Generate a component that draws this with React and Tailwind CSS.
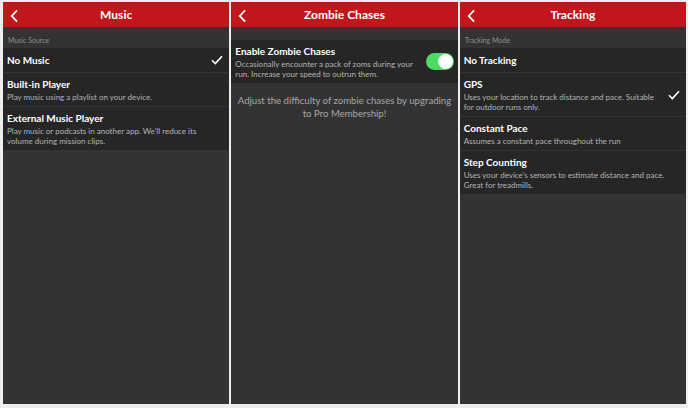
import React from 'react';

const font = { fontFamily: 'Lato, "Noto Sans", sans-serif' };

function Chevron() {
  return (
    <svg width="8" height="12" viewBox="0 0 8 12" className="absolute left-[7px] top-[8px]">
      <path d="M6.5 1 L1.8 6 L6.5 11" fill="none" stroke="white" strokeWidth="1.8" strokeLinecap="square" />
    </svg>
  );
}

function Check() {
  return (
    <svg width="12" height="10" viewBox="0 0 12 10" className="shrink-0">
      <path d="M1 5.2 L4.3 8.5 L11 1.2" fill="none" stroke="white" strokeWidth="1.6" />
    </svg>
  );
}

function Header({ title }) {
  return (
    <div className="relative h-[25px] bg-[#c1161c] flex items-center justify-center">
      <Chevron />
      <span className="text-white text-[12px] font-bold leading-none">{title}</span>
    </div>
  );
}

function SectionLabel({ children }) {
  return (
    <div className="h-[21px] flex items-end pb-[4px] pl-[5px] text-[7px] text-[#8f8f8f] leading-none">
      {children}
    </div>
  );
}

function Row({ title, sub, checked, last }) {
  return (
    <div className={`bg-[#262626] flex items-center pl-[4px] pr-[6px] ${last ? '' : 'border-b border-[#333333]'} ${sub ? 'py-[4.5px]' : 'h-[25px]'}`}>
      <div className="flex-1">
        <div className="text-white text-[10px] font-bold leading-[13px]">{title}</div>
        {sub && <div className="text-[#b5b5b5] text-[8px] leading-[10px] mt-[1px]">{sub}</div>}
      </div>
      {checked && <Check />}
    </div>
  );
}

function Panel({ children }) {
  return <div className="flex-1 bg-[#333333] flex flex-col">{children}</div>;
}

export default function App() {
  return (
    <div className="w-[688px] h-[408px] bg-[#eeeeee] flex gap-[2px] pl-[3px] pr-[2px] pt-[2px] pb-[4px]" style={font}>
      <Panel>
        <Header title="Music" />
        <SectionLabel>Music Source</SectionLabel>
        <Row title="No Music" checked />
        <Row title="Built-in Player" sub="Play music using a playlist on your device." />
        <Row title="External Music Player" sub={<>Play music or podcasts in another app. We’ll reduce its<br />volume during mission clips.</>} last />
      </Panel>
      <Panel>
        <Header title="Zombie Chases" />
        <div className="h-[13px]" />
        <div className="bg-[#262626] flex items-center pl-[4px] pr-[4px] h-[43px]">
          <div className="flex-1">
            <div className="text-white text-[10px] font-bold leading-[13px]">Enable Zombie Chases</div>
            <div className="text-[#b5b5b5] text-[8px] leading-[10px] mt-[1px]">
              Occasionally encounter a pack of zoms during your<br />run. Increase your speed to outrun them.
            </div>
          </div>
          <div className="w-[28px] h-[17px] rounded-full bg-[#4cd964] flex items-center justify-end pr-[1px] shrink-0">
            <div className="w-[15px] h-[15px] rounded-full bg-white" />
          </div>
        </div>
        <div className="mt-[11px] text-center text-[#a8a8a8] text-[9.6px] leading-[13px] px-[2px]">
          Adjust the difficulty of zombie chases by upgrading<br />to Pro Membership!
        </div>
      </Panel>
      <Panel>
        <Header title="Tracking" />
        <SectionLabel>Tracking Mode</SectionLabel>
        <Row title="No Tracking" />
        <Row title="GPS" sub={<>Uses your location to track distance and pace. Suitable<br />for outdoor runs only.</>} checked />
        <Row title="Constant Pace" sub="Assumes a constant pace throughout the run" />
        <Row title="Step Counting" sub={<>Uses your device’s sensors to estimate distance and pace.<br />Great for treadmills.</>} last />
      </Panel>
    </div>
  );
}
